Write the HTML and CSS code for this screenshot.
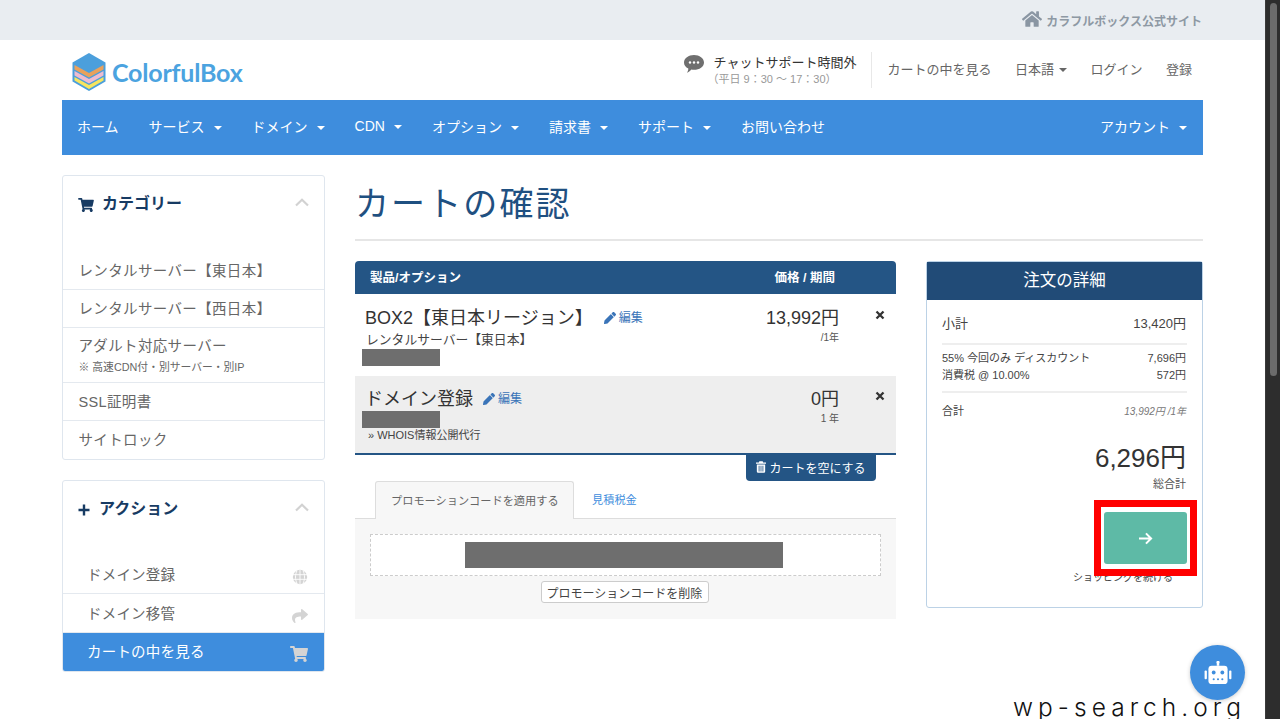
FILE: index.html
```html
<!DOCTYPE html>
<html lang="ja">
<head>
<meta charset="utf-8">
<title>カートの確認</title>
<link rel="stylesheet" href="styles.css">
</head>
<body>
<svg class="defs" width="0" height="0">
  <symbol id="i-cart" viewBox="0 0 576 512"><path d="M528.12 301.319l47.273-208C578.806 78.301 567.391 64 551.99 64H159.208l-9.166-44.81C147.758 8.021 137.93 0 126.529 0H24C10.745 0 0 10.745 0 24v16c0 13.255 10.745 24 24 24h69.883l70.248 343.435C147.325 417.1 136 435.222 136 456c0 30.928 25.072 56 56 56s56-25.072 56-56c0-15.674-6.447-29.835-16.824-40h209.647C430.447 426.165 424 440.326 424 456c0 30.928 25.072 56 56 56s56-25.072 56-56c0-22.172-12.888-41.332-31.579-50.405l5.517-24.276c3.413-15.018-8.002-29.319-23.403-29.319H218.117l-6.545-32h293.145c11.206 0 20.92-7.754 23.403-18.681z"/></symbol>
  <symbol id="i-pencil" viewBox="0 0 512 512"><path d="M497.9 142.1l-46.1 46.1c-4.7 4.7-12.3 4.7-17 0l-111-111c-4.7-4.7-4.7-12.3 0-17l46.1-46.1c18.7-18.7 49.1-18.7 67.9 0l60.1 60.1c18.8 18.7 18.8 49.1 0 67.9zM284.2 99.8L21.6 362.4.4 483.9c-2.9 16.4 11.4 30.6 27.8 27.8l121.5-21.3 262.6-262.6c4.7-4.7 4.7-12.3 0-17l-111-111c-4.8-4.7-12.4-4.7-17.1 0z"/></symbol>
  <symbol id="i-chev" viewBox="0 0 14 9"><path d="M1 7.5 7 1.8l6 5.7" fill="none" stroke="currentColor" stroke-width="2.2"/></symbol>
  <symbol id="i-x" viewBox="0 0 10 10"><path d="M1.5 1.5l7 7m0-7l-7 7" fill="none" stroke="currentColor" stroke-width="2.3"/></symbol>
</svg>

<div class="app">
  <div class="page">
    <div class="topbar">
      <a class="official">
        <svg class="i-home" viewBox="0 0 576 512"><path d="M280.37 148.26L96 300.11V464a16 16 0 0 0 16 16l112.06-.29a16 16 0 0 0 15.92-16V368a16 16 0 0 1 16-16h64a16 16 0 0 1 16 16v95.64a16 16 0 0 0 16 16.05L464 480a16 16 0 0 0 16-16V300L295.67 148.26a12.19 12.19 0 0 0-15.3 0zM571.6 251.47L488 182.56V44.05a12 12 0 0 0-12-12h-56a12 12 0 0 0-12 12v72.61L318.47 43a48 48 0 0 0-61 0L4.34 251.47a12 12 0 0 0-1.6 16.9l25.5 31A12 12 0 0 0 45.15 301l235.22-193.74a12.19 12.19 0 0 1 15.3 0L530.9 301a12 12 0 0 0 16.9-1.6l25.5-31a12 12 0 0 0-1.7-16.93z"/></svg>
        <span>カラフルボックス公式サイト</span>
      </a>
    </div>

    <div class="container">
      <header class="header">
        <a class="logo">
          <svg class="logo-mark" viewBox="0 0 34 38">
            <path d="M17 0 33.5 9.5v19L17 38 .5 28.5v-19z" fill="#4b9fdc"/>
            <path d="M2.5 12 17 20l14.500-8v4.500L17 24.500 2.500 16.500z" fill="#e9a15c"/>
            <path d="M2.500 18 17 26l14.500-8v4.500L17 30.500 2.500 22.500z" fill="#eebcd0"/>
            <path d="M2.500 24 17 32l14.500-8v3.600L17 36 2.500 27.600z" fill="#f7e55f"/>
          </svg>
          <span class="logo-text">ColorfulBox</span>
        </a>
        <div class="header-right">
          <div class="chat-status">
            <svg class="i-chat" viewBox="0 0 20 18">
              <path d="M10 0c5.500 0 10 3.300 10 7.400s-4.500 7.400-10 7.400c-.9 0-1.800-.1-2.600-.3C6.200 16 4.400 17.500 3 17.800c.8-1.100 1.300-2.600 1.300-4.200C1.700 12.300 0 10 0 7.400 0 3.300 4.500 0 10 0z" fill="#6f6f6f"/>
              <circle cx="6" cy="7.500" r="1.200" fill="#fff"/><circle cx="10" cy="7.500" r="1.200" fill="#fff"/><circle cx="14" cy="7.500" r="1.200" fill="#fff"/>
            </svg>
            <div class="chat-text">
              <div class="chat-main">チャットサポート時間外</div>
              <div class="chat-sub">（平日 9：30 ～ 17：30）</div>
            </div>
          </div>
          <nav class="header-links">
            <a>カートの中を見る</a>
            <a>日本語<i class="caret caret-dark"></i></a>
            <a>ログイン</a>
            <a>登録</a>
          </nav>
        </div>
      </header>

      <nav class="mainnav">
        <a>ホーム</a>
        <a>サービス<i class="caret"></i></a>
        <a>ドメイン<i class="caret"></i></a>
        <a>CDN<i class="caret"></i></a>
        <a>オプション<i class="caret"></i></a>
        <a>請求書<i class="caret"></i></a>
        <a>サポート<i class="caret"></i></a>
        <a>お問い合わせ</a>
        <a class="nav-right">アカウント<i class="caret"></i></a>
      </nav>

      <div class="layout">
        <aside class="sidebar">
          <section class="panel panel-cat">
            <div class="panel-head">
              <svg class="head-icon"><use href="#i-cart"/></svg>
              <h3>カテゴリー</h3>
              <svg class="chev"><use href="#i-chev"/></svg>
            </div>
            <a class="side-item">レンタルサーバー【東日本】</a>
            <a class="side-item">レンタルサーバー【西日本】</a>
            <a class="side-item side-tall">アダルト対応サーバー<small>※ 高速CDN付・別サーバー・別IP</small></a>
            <a class="side-item">SSL証明書</a>
            <a class="side-item">サイトロック</a>
          </section>

          <section class="panel">
            <div class="panel-head">
              <svg class="head-icon head-plus" viewBox="0 0 12 12"><path d="M6 .5v11M.5 6h11" stroke="currentColor" stroke-width="2.400" fill="none"/></svg>
              <h3>アクション</h3>
              <svg class="chev"><use href="#i-chev"/></svg>
            </div>
            <a class="side-item side-action">ドメイン登録
              <svg class="side-icon" viewBox="0 0 16 16"><circle cx="8" cy="8" r="7.200" fill="currentColor"/><path d="M.8 5.700h14.400M.8 10.300h14.400M8 .8v14.400M5 1.500C3 6 3 10 5 14.500M11 1.500c2 4.500 2 8.500 0 13" fill="none" stroke="#fff" stroke-width=".9"/></svg>
            </a>
            <a class="side-item side-action">ドメイン移管
              <svg class="side-icon" viewBox="0 0 512 512"><path d="M503.691 189.836L327.687 37.851C312.281 24.546 288 35.347 288 56.015v80.053C127.371 137.907 0 170.1 0 322.326c0 61.441 39.581 122.309 83.333 154.132 13.653 9.931 33.111-2.533 28.077-18.631C66.066 312.814 132.917 274.316 288 272.085V360c0 20.7 24.3 31.453 39.687 18.164l176.004-152c11.071-9.562 11.086-26.753 0-36.328z" fill="currentColor"/></svg>
            </a>
            <a class="side-item side-action active">カートの中を見る
              <svg class="side-icon side-icon-cart"><use href="#i-cart"/></svg>
            </a>
          </section>
        </aside>

        <main class="content">
          <h1 class="title">カートの確認</h1>
          <div class="columns">
            <div class="cart">
              <div class="cart-head"><span>製品/オプション</span><span class="cart-head-price">価格 / 期間</span></div>

              <div class="cart-row">
                <div class="cart-info">
                  <div class="prod-name">BOX2【東日本リージョン】<a class="edit edit-wide"><svg class="i-pencil"><use href="#i-pencil"/></svg>編集</a></div>
                  <div class="prod-group">レンタルサーバー【東日本】</div>
                  <div class="redact"></div>
                </div>
                <div class="cart-price"><div class="price">13,992円</div><div class="cycle">/1年</div></div>
                <svg class="remove"><use href="#i-x"/></svg>
              </div>

              <div class="cart-row cart-row-alt">
                <div class="cart-info">
                  <div class="prod-name">ドメイン登録<a class="edit"><svg class="i-pencil"><use href="#i-pencil"/></svg>編集</a></div>
                  <div class="redact redact-alt"></div>
                  <div class="addon">» WHOIS情報公開代行</div>
                </div>
                <div class="cart-price"><div class="price">0円</div><div class="cycle">1 年</div></div>
                <svg class="remove"><use href="#i-x"/></svg>
              </div>

              <div class="empty-wrap">
                <a class="empty-btn">
                  <svg class="i-trash" viewBox="0 0 12 14"><path d="M4 0h4l.6 1.500H12v1.500H0V1.500h3.400zM1 4h10v8.500a1.500 1.500 0 0 1-1.500 1.500h-7A1.500 1.500 0 0 1 1 12.500zM3.200 5.500v7h1v-7zM5.500 5.500v7h1v-7zM7.800 5.500v7h1v-7z" fill="#fff" fill-rule="evenodd"/></svg>
                  カートを空にする
                </a>
              </div>

              <div class="tabs">
                <a class="tab tab-active">プロモーションコードを適用する</a>
                <a class="tab">見積税金</a>
              </div>
              <div class="tab-pane">
                <div class="promo-box"><div class="promo-code"></div></div>
                <button class="promo-remove" type="button">プロモーションコードを削除</button>
              </div>
            </div>

            <div class="summary">
              <div class="summary-head">注文の詳細</div>
              <div class="summary-body">
                <div class="sum-row sum-sub"><span>小計</span><span>13,420円</span></div>
                <div class="sum-group">
                  <div class="sum-row"><span>55% 今回のみ ディスカウント</span><span>7,696円</span></div>
                  <div class="sum-row"><span>消費税 @ 10.00%</span><span>572円</span></div>
                </div>
                <div class="sum-row sum-total"><span>合計</span><em>13,992円 /1年</em></div>
                <div class="grand">6,296円</div>
                <div class="grand-label">総合計</div>
                <div class="checkout-wrap">
                  <a class="checkout">
                    <svg class="i-arrow" viewBox="0 0 16 14"><path d="M1 7h13M8.500 1.500 14 7l-5.500 5.500" fill="none" stroke="#fff" stroke-width="2.200"/></svg>
                  </a>
                </div>
                <div class="continue">ショッピングを続ける</div>
                <div class="annotation"></div>
              </div>
            </div>
          </div>
        </main>
      </div>
    </div>
  </div>

  <div class="scrollbar"><div class="thumb"></div></div>

  <a class="bot">
    <svg viewBox="0 0 28 24" class="i-bot">
      <rect x="4" y="5" width="20" height="19" rx="3.500" fill="#fff"/>
      <rect x="12.700" y="0" width="2.600" height="5" fill="#fff"/><circle cx="14" cy="1.500" r="1.500" fill="#fff"/>
      <rect x="0" y="10" width="2.400" height="9" rx="1" fill="#fff"/><rect x="25.600" y="10" width="2.400" height="9" rx="1" fill="#fff"/>
      <circle cx="9.500" cy="12" r="2" fill="#3e8ddd"/><circle cx="18.500" cy="12" r="2" fill="#3e8ddd"/>
      <circle cx="9.500" cy="19" r="1.100" fill="#3e8ddd"/><circle cx="14" cy="19" r="1.100" fill="#3e8ddd"/><circle cx="18.500" cy="19" r="1.100" fill="#3e8ddd"/>
    </svg>
  </a>
  <div class="watermark">wp-search.org</div>
</div>
</body>
</html>
```

FILE: styles.css
```css
* { box-sizing: border-box; }
html, body { margin: 0; padding: 0; height: 100%; overflow: hidden; }
body {
  font-family: "Liberation Sans", "Noto Sans CJK JP", sans-serif;
  color: #333;
  background: #fff;
  font-size: 14px;
}
.defs { position: absolute; }
a { color: inherit; text-decoration: none; }
svg { display: block; fill: currentColor; }

.app { display: flex; height: 719px; position: relative; overflow: hidden; }
.page { flex: 1; min-width: 0; }

.scrollbar { width: 15px; background: #2d2d2d; padding: 3px 3px 0 4px; flex: none; border-left: 1px solid #3a3a3a; }
.thumb { height: 373px; background: #6b6b6b; border-radius: 4px; }

.topbar {
  height: 40px;
  background: #e9edf1;
  display: flex;
  justify-content: flex-end;
  align-items: center;
  padding-right: 63px;
}
.official { display: flex; align-items: center; gap: 4px; color: #8e99a4; font-size: 12px; font-weight: 700; }
.i-home { width: 20px; height: 18px; margin-top: -3px; fill: #8a96a3; }

.container { margin-left: 62px; width: 1141px; }

.header { height: 60px; display: flex; justify-content: space-between; align-items: center; }
.logo { display: flex; align-items: center; gap: 6px; margin-left: 10px; }
.logo-mark { width: 34px; height: 38px; margin-top: 3px; }
.logo-text { font-family: "Lato", sans-serif; font-size: 25px; font-weight: 700; color: #4ba3e0; letter-spacing: -.2px; margin-top: 3px; }

.header-right { display: flex; align-items: center; height: 36px; }
.chat-status { display: flex; align-items: flex-start; gap: 10px; padding-right: 15px; border-right: 1px solid #e8e8e8; height: 36px; }
.i-chat { width: 20px; height: 18px; margin-top: 3px; }
.chat-main { font-size: 13px; line-height: 17px; margin-top: 2px; color: #333; }
.chat-sub { font-size: 11px; line-height: 14px; margin-top: 1px; color: #999; margin-left: -6px; }
.header-links { display: flex; align-items: center; gap: 23.500px; padding: 0 11px 4px 15px; font-size: 13px; color: #666; }
.caret { display: inline-block; margin-left: 5px; vertical-align: 2px; border-left: 4px solid transparent; border-right: 4px solid transparent; border-top: 4px solid #fff; }
.caret-dark { border-top-color: #666; }

.mainnav { height: 55px; background: #3e8ddd; display: flex; align-items: center; color: #fff; font-size: 14px; padding: 0 16px 4px 15px; gap: 30px; }
.mainnav .caret { margin-left: 9px; }
.nav-right { margin-left: auto; }

.layout { display: flex; gap: 30px; padding-top: 20px; }
.sidebar { width: 263px; flex: none; display: flex; flex-direction: column; gap: 20px; }
.panel { border: 1px solid #dfe6ee; border-radius: 3px; background: #fff; overflow: hidden; }
.panel-head { height: 75px; display: flex; align-items: flex-start; padding: 18px 15px 0; color: #173b63; }
.panel-cat .panel-head { height: 76px; }
.panel-head h3 { margin: 0; font-size: 16px; line-height: 20px; font-weight: 700; flex: 1; }
.head-icon { width: 16px; height: 14px; margin: 4px 8px 0 0; flex: none; }
.head-plus { width: 12px; height: 12px; margin: 5px 9px 0 0; }
.chev { width: 14px; height: 9px; color: #d2d2d2; margin-top: 4px; }
.side-item {
  display: flex; flex-direction: column; justify-content: center;
  height: 38px; padding: 0 16px 2px 15.500px; font-size: 14.500px; color: #666;
  border-bottom: 1px solid #e4e9ef; letter-spacing: .35px;
}
.side-item:last-child { border-bottom: 0; padding-bottom: 4px; }
.side-tall { height: 55px; line-height: 18px; padding-top: 2px; padding-bottom: 1px; }
.side-tall small { font-size: 10.800px; line-height: 14px; margin-top: 5px; letter-spacing: 0; }
.side-action { flex-direction: row; align-items: center; justify-content: space-between; padding: 0 16px 2px 24px; height: 38px; letter-spacing: .2px; }
.side-action + .side-action { height: 39px; }
.side-icon { width: 16px; height: 16px; color: #d4d4d4; margin-top: 7px; }
.side-icon-cart { width: 18px; height: 16px; }
.side-action.active { background: #3e8ddd; color: #fff; border-bottom: 0; height: 38px; padding-bottom: 4px; }

.content { flex: 1; min-width: 0; padding-top: 1px; }
.title { margin: 0; font-size: 34px; line-height: 54px; height: 65px; padding-top: 1px; font-weight: 400; color: #1f5081; border-bottom: 2px solid #e6e6e6; letter-spacing: 2.100px; }
.columns { display: flex; gap: 30px; align-items: flex-start; padding-top: 20px; }

.cart { width: 541px; flex: none; }
.cart-head { height: 33px; background: #245585; color: #fff; font-size: 12.500px; font-weight: 700; border-radius: 4px 4px 0 0; display: flex; align-items: center; padding: 0 0 2px 15px; }
.cart-head-price { margin-left: auto; margin-right: 61px; }

.cart-row { height: 82px; display: flex; align-items: flex-start; padding: 12px 0 0 10px; position: relative; }
.cart-row-alt { height: 79px; background: #eee; border-bottom: 2px solid #245585; padding-top: 11px; }
.cart-info { flex: 1; min-width: 0; }
.prod-name { font-size: 18px; line-height: 24px; display: flex; align-items: center; color: #333; }
.edit { display: flex; align-items: center; gap: 3px; margin-left: 10px; font-size: 12px; color: #3a74b8; }
.edit-wide { margin-left: 11px; }
.i-pencil { width: 12px; height: 12px; }
.prod-group { font-size: 12.800px; line-height: 16px; margin: 2px 0 0 1px; color: #444; }
.redact { width: 78px; height: 17px; background: #6e6e6e; margin: 1px 0 0 -3px; }
.redact-alt { margin-top: 0; }
.addon { font-size: 11px; line-height: 14px; margin: 0 0 0 3px; color: #444; }
.cart-price { width: 90px; text-align: right; margin-right: 57px; }
.price { font-size: 18px; line-height: 24px; color: #333; }
.cycle { font-size: 10px; line-height: 14px; color: #555; margin-top: 1px; }
.remove { width: 10px; height: 10px; color: #333; position: absolute; top: 16px; right: 11px; }
.cart-row-alt .remove { top: 15px; }

.empty-wrap { display: flex; justify-content: flex-end; padding-right: 20px; }
.empty-btn { height: 26px; width: 130px; padding-bottom: 2px; background: #245585; color: #fff; font-size: 12px; border-radius: 0 0 4px 4px; display: flex; align-items: center; justify-content: center; gap: 3px; }
.i-trash { width: 10px; height: 12px; }

.tabs { display: flex; padding-left: 20px; border-bottom: 1px solid #ddd; height: 38px; }
.tab { height: 38px; display: flex; align-items: center; padding: 0 18px 2px; font-size: 11.200px; color: #3e8ddd; white-space: nowrap; }
.tab-active { width: 199px; padding: 0 10px 2px 15px; background: #f7f7f7; border: 1px solid #ddd; border-bottom: 0; border-radius: 3px 3px 0 0; color: #666; height: 38px; }

.tab-pane { background: #f7f7f7; height: 100px; padding: 15px 15px 0; display: flex; flex-direction: column; align-items: center; }
.promo-box { width: 100%; height: 42px; background: #fff; border: 1px dashed #ccc; display: flex; justify-content: center; padding: 7px 4px 0 0; }
.promo-code { width: 318px; height: 26px; background: #6e6e6e; }
.promo-remove { margin: 5px 2px 0 0; height: 22px; width: 168px; padding: 0; background: #fff; border: 1px solid #ccc; border-radius: 3px; font: inherit; font-size: 12px; color: #444; }

.summary { width: 277px; flex: none; height: 347px; border: 1px solid #bcd2e6; border-radius: 3px; background: #fff; }
.summary-head { height: 38px; background: #214b77; color: #fff; font-size: 16.500px; line-height: 36px; text-align: center; }
.summary-body { padding: 0 15px; position: relative; height: 308px; }
.sum-row { display: flex; justify-content: space-between; font-size: 11px; line-height: 17px; color: #444; padding: 0 1px 0 0; }
.sum-sub { font-size: 13px; height: 45px; padding-top: 15px; line-height: 18px; border-bottom: 2px solid #eee; }
.sum-group { padding-top: 5px; height: 48px; border-bottom: 2px solid #eee; }
.sum-total { padding-top: 10px; line-height: 17px; }
.sum-total em { font-size: 10px; color: #777; }
.grand { text-align: right; font-size: 26px; line-height: 32px; color: #333; margin-top: 22px; padding-right: 1px; }
.grand-label { text-align: right; font-size: 11px; line-height: 14px; color: #555; margin-top: 3px; padding-right: 1px; }
.checkout-wrap { display: flex; justify-content: flex-end; margin-top: 21px; }
.checkout { width: 83px; height: 52px; background: #5ebaa6; border-radius: 3px; display: flex; align-items: center; justify-content: center; }
.i-arrow { width: 15px; height: 13px; }
.continue { font-size: 10px; line-height: 12px; margin: 8px 0 0 131px; width: 100px; color: #444; white-space: nowrap; }
.annotation { position: absolute; left: 167px; top: 200px; width: 103px; height: 76px; border: 7px solid #f00; pointer-events: none; }

.bot { position: absolute; left: 1190px; top: 645px; width: 55px; height: 55px; border-radius: 50%; background: #3e8ddd; box-shadow: 0 1px 4px rgba(0,0,0,.2); display: flex; align-items: center; justify-content: center; }
.i-bot { width: 28px; height: 23px; }
.watermark { position: absolute; left: 1013px; top: 695px; font-family: "Inter", sans-serif; font-weight: 300; font-size: 24.500px; line-height: 24px; letter-spacing: 5.050px; color: #111; white-space: nowrap; }
```
